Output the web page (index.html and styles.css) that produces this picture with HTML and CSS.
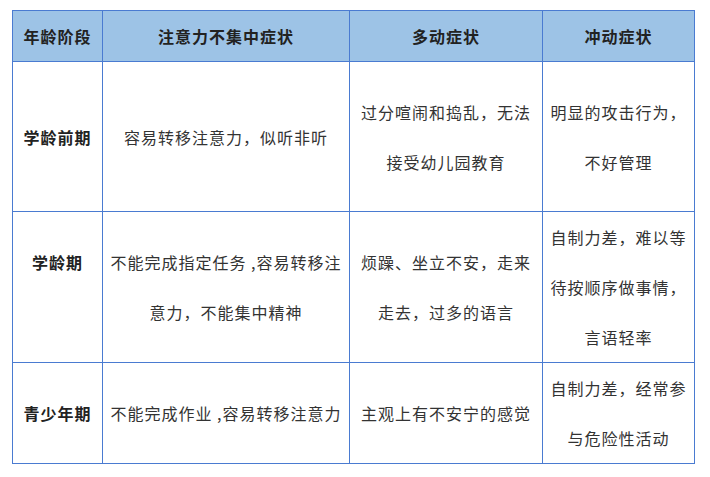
FILE: index.html
```html
<!DOCTYPE html>
<html lang="zh-CN">
<head>
<meta charset="utf-8">
<title>ADHD 症状</title>
<link rel="stylesheet" href="styles.css">
</head>
<body>
<table class="sym-table">
  <colgroup>
    <col class="c1"><col class="c2"><col class="c3"><col class="c4">
  </colgroup>
  <thead>
    <tr class="head-row">
      <th>年龄阶段</th>
      <th>注意力不集中症状</th>
      <th>多动症状</th>
      <th>冲动症状</th>
    </tr>
  </thead>
  <tbody>
    <tr class="row-a">
      <td class="age">学龄前期</td>
      <td>容易转移注意力，似听非听</td>
      <td>过分喧闹和捣乱，无法接受幼儿园教育</td>
      <td>明显的攻击行为，不好管理</td>
    </tr>
    <tr class="row-b">
      <td class="age age-raised">学龄期</td>
      <td>不能完成指定任务 ,容易转移注意力，不能集中精神</td>
      <td>烦躁、坐立不安，走来走去，过多的语言</td>
      <td>自制力差，难以等待按顺序做事情，言语轻率</td>
    </tr>
    <tr class="row-c">
      <td class="age">青少年期</td>
      <td>不能完成作业 ,容易转移注意力</td>
      <td>主观上有不安宁的感觉</td>
      <td>自制力差，经常参与危险性活动</td>
    </tr>
  </tbody>
</table>
</body>
</html>
```

FILE: styles.css
```css
html, body {
  margin: 0;
  padding: 0;
  background: #ffffff;
}

body {
  padding: 10px 0 0 12px;
  font-family: "Noto Sans CJK SC", "Noto Sans", sans-serif;
  font-size: 16px;
  color: #333333;
}

.sym-table {
  border-collapse: collapse;
  table-layout: fixed;
  width: 682px;
}

.c1 { width: 90px; }
.c2 { width: 247px; }
.c3 { width: 193px; }
.c4 { width: 152px; }

.sym-table th,
.sym-table td {
  border: 1px solid #4a7bd1;
  text-align: center;
  vertical-align: middle;
  padding: 0 5px;
  line-height: 50px;
  letter-spacing: 1px;
  word-break: normal;
}

.sym-table th {
  background: #9dc3e6;
  color: #222222;
  font-weight: bold;
  height: 50px;
}

.sym-table td.age {
  font-weight: bold;
  color: #222222;
}

.sym-table td.age-raised {
  padding-bottom: 50px;
}

.row-a td { height: 149px; }
.row-b td { height: 150px; }
.row-b td.age-raised { height: 100px; }
.row-c td { height: 99px; }
```
